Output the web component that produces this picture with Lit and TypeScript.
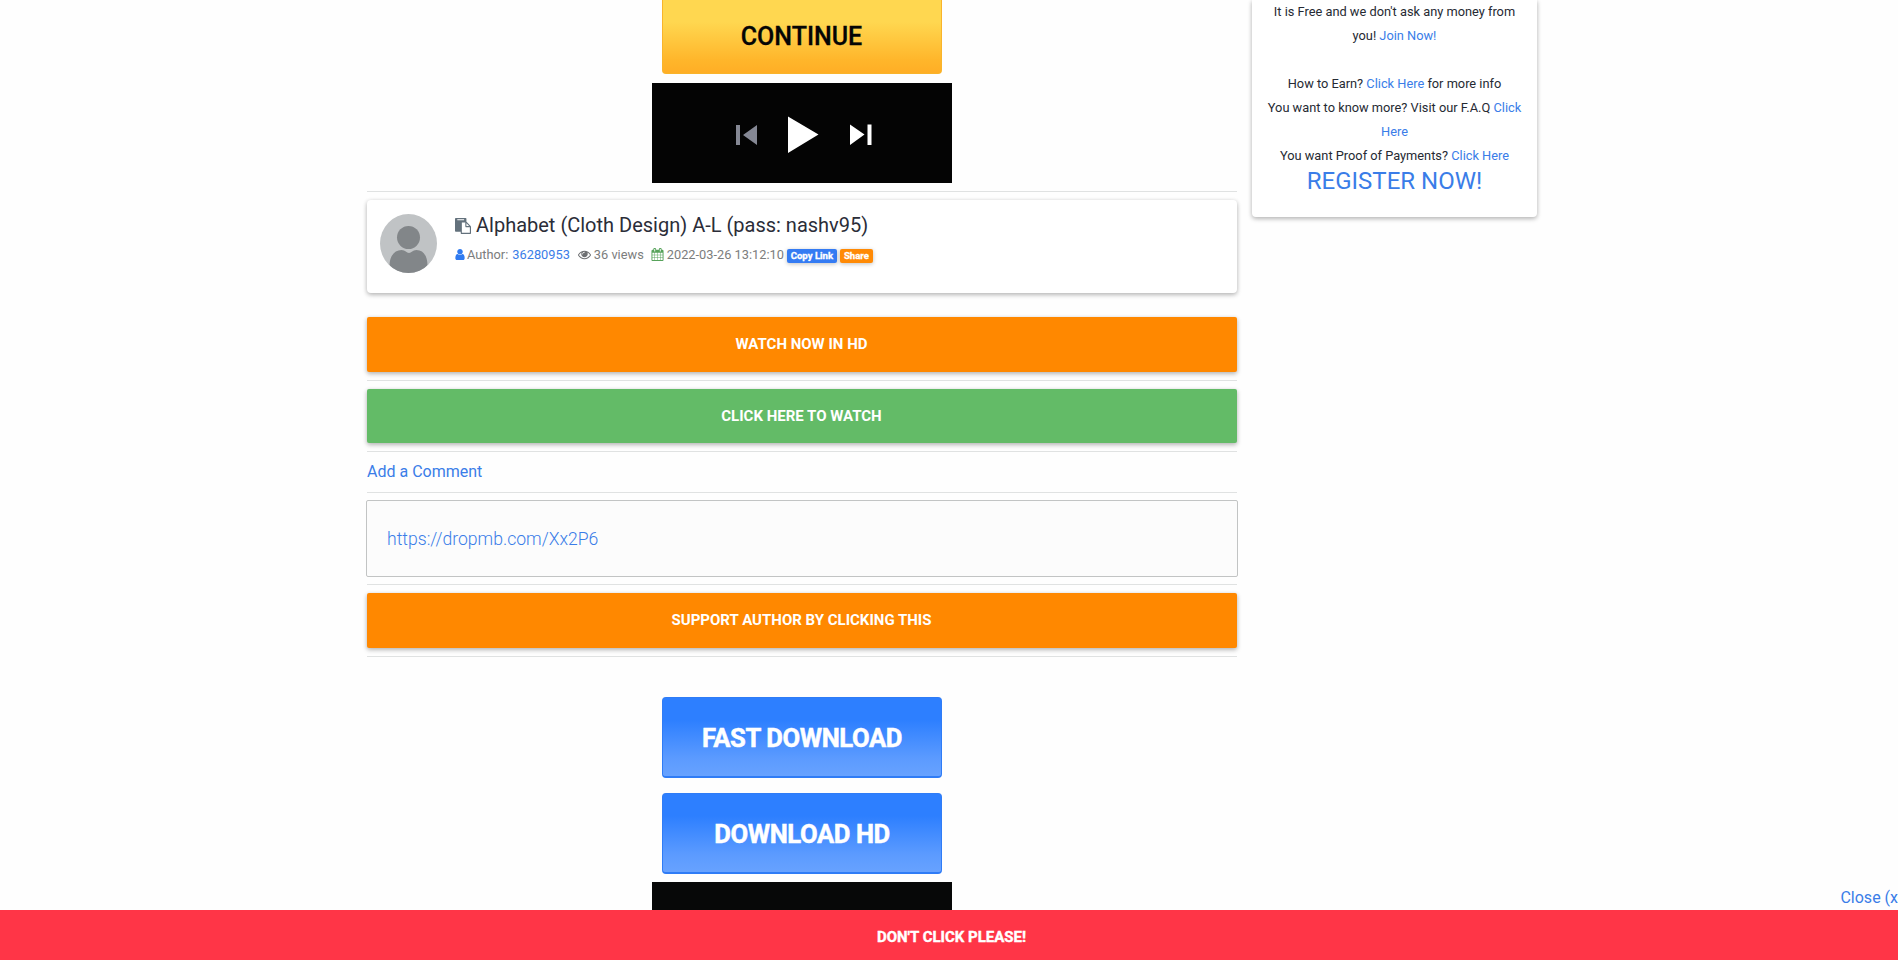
import { LitElement, html, css, svg } from "lit";
import { customElement } from "lit/decorators.js";

const ICONS = {
  user: "M1536 1399q0 109-62.5 187t-150.5 78h-854q-88 0-150.5-78t-62.5-187q0-85 8.5-160.5t31.5-152 58.5-131 94-89 134.5-34.5q131 128 313 128t313-128q76 0 134.5 34.5t94 89 58.5 131 31.5 152 8.5 160.5zm-256-887q0 159-112.5 271.5t-271.5 112.5-271.5-112.5-112.5-271.5 112.5-271.5 271.5-112.5 271.5 112.5 112.5 271.5z",
  eye: "M1664 960q-152-236-381-353 61 104 61 225 0 185-131.5 316.5t-316.5 131.5-316.5-131.5-131.5-316.5q0-121 61-225-229 117-381 353 133 205 333.5 326.5t434.5 121.5 434.5-121.5 333.5-326.5zm-720-384q0-20-14-34t-34-14q-125 0-214.5 89.5t-89.5 214.5q0 20 14 34t34 14 34-14 14-34q0-86 61-147t147-61q20 0 34-14t14-34zm848 384q0 34-20 69-140 230-376.5 368.5t-499.5 138.5-499.5-139-376.5-368q-20-35-20-69t20-69q140-229 376.5-368t499.5-139 499.5 139 376.5 368q20 35 20 69z",
  calendar: "M192 1664h288v-288h-288v288zm352 0h320v-288h-320v288zm-352-352h288v-320h-288v320zm352 0h320v-320h-320v320zm-352-384h288v-288h-288v288zm736 736h320v-288h-320v288zm-384-736h320v-288h-320v288zm768 736h288v-288h-288v288zm-384-352h320v-320h-320v320zm-352-864v-288q0-13-9.5-22.5t-22.5-9.5h-64q-13 0-22.5 9.5t-9.5 22.5v288q0 13 9.5 22.5t22.5 9.5h64q13 0 22.5-9.5t9.5-22.5zm736 864h288v-320h-288v320zm-384-384h320v-288h-320v288zm384 0h288v-288h-288v288zm32-480v-288q0-13-9.5-22.5t-22.5-9.5h-64q-13 0-22.5 9.5t-9.5 22.5v288q0 13 9.5 22.5t22.5 9.5h64q13 0 22.5-9.5t9.5-22.5zm384-64v1280q0 52-38 90t-90 38h-1408q-52 0-90-38t-38-90v-1280q0-52 38-90t90-38h128v-96q0-66 47-113t113-47h64q66 0 113 47t47 113v96h384v-96q0-66 47-113t113-47h64q66 0 113 47t47 113v96h128q52 0 90 38t38 90z",
  paste: "M768 1664h896v-640h-416q-40 0-68-28t-28-68v-416h-384v1152zm256-1440v-64q0-13-9.5-22.5t-22.5-9.5h-704q-13 0-22.5 9.5t-9.5 22.5v64q0 13 9.5 22.5t22.5 9.5h704q13 0 22.5-9.5t9.5-22.5zm256 672h299l-299-299v299zm512 128v672q0 40-28 68t-68 28h-960q-40 0-68-28t-28-68v-160h-544q-40 0-68-28t-28-68v-1344q0-40 28-68t68-28h1088q40 0 68 28t28 68v328q21 13 36 28l408 408q28 28 48 76t20 88z",
};

const icon = (name: keyof typeof ICONS, cls: string, box = "0 0 1792 1792") =>
  html`<svg class=${cls} viewBox=${box}>${svg`<path fill="currentColor" d=${ICONS[name]}></path>`}</svg>`;

@customElement("app-root")
export class AppRoot extends LitElement {
  static styles = css`
    :host {
      display: block;
      position: relative;
      height: 960px;
      overflow: hidden;
      background: #fefefe;
      color: #262a33;
      font-family: Roboto, "Liberation Sans", sans-serif;
    }
    * { box-sizing: border-box; }
    svg { display: block; flex: none; }
    a { color: #3a7de8; text-decoration: none; }
    .page { display: flex; align-items: flex-start; gap: 15px; padding-left: 367px; }
    .main { width: 870px; display: flex; flex-direction: column; }
    .rule { height: 1px; background: #e0e2e2; }
    .rule-above { margin-top: 8px; }
    .rule-tight { margin: 7px 0 8px; }
    .cta {
      align-self: center;
      display: flex;
      align-items: center;
      justify-content: center;
      width: 280px;
      height: 81px;
      border-radius: 4px;
      font-size: 25.6px;
      letter-spacing: -0.4px;
      font-weight: 700;
      -webkit-text-stroke: 0.5px #fff;
      color: #fff;
      border: 1px solid #2f7cf6;
      border-bottom-width: 2px;
      background: linear-gradient(#2d7fff 28%, #5c9bff 78%, #67a2ff);
      padding-top: 2px;
      white-space: nowrap;
    }
    .continue {
      height: 74px;
      border: 1px solid #f9b42b;
      border-top: 0;
      border-radius: 0 0 4px 4px;
      background: linear-gradient(#ffd750 30%, #ffb62b 82%, #ffae25);
      color: #050505;
      font-size: 25px;
      letter-spacing: 0;
      font-weight: 500;
      -webkit-text-stroke: 0.3px #050505;
      padding: 0 1px 1px 0;
    }
    .fast { margin-top: 40px; }
    .hd { margin-top: 15px; }
    .player { align-self: center; width: 300px; height: 100px; margin: 9px 0 8px; background: #040404; }
    .player-next { margin: 8px 0 0; background: #070808; }
    .card {
      height: 93px;
      margin: 8px 0 24px;
      padding: 13px 12px 13px 13px;
      display: flex;
      gap: 17px;
      background: #fff;
      border-radius: 4px;
      box-shadow: 0 2px 5px rgba(0, 0, 0, 0.2), 0 1px 4px rgba(0, 0, 0, 0.14);
    }
    .avatar { margin-top: 1px; }
    .title { display: flex; align-items: center; height: 24px; gap: 5px; font-size: 20px; color: #2b2d38; white-space: nowrap; }
    .title-icon { width: 16px; height: 16px; margin-top: 2px; color: #63717c; }
    .meta { display: flex; align-items: center; height: 20px; margin-top: 7px; font-size: 12.8px; color: #7b7d7d; white-space: nowrap; }
    .i-user { width: 10px; height: 13px; color: #2f7af0; margin-right: 2px; }
    .i-eye { width: 13px; height: 13px; color: #6e7072; margin: 0 3px 0 8px; }
    .i-cal { width: 13px; height: 13px; color: #57a35b; margin: 0 3px 0 7px; }
    .author { margin-left: 4px; }
    .badge {
      height: 14px;
      margin: 3px 0 0 3px;
      border-radius: 2px;
      color: #fff;
      background: #347bf3;
      font-size: 9.6px;
      font-weight: 700;
      -webkit-text-stroke: 0.3px #fff;
      line-height: 14px;
      width: 50px;
      text-align: center;
      box-shadow: 0 1px 4px rgba(0, 0, 0, 0.25);
    }
    .share { width: 33px; background: #ff8a05; }
    .bar {
      height: 55px;
      display: flex;
      align-items: center;
      justify-content: center;
      padding: 0 1px 2px 0;
      border-radius: 2px;
      background: #ff8800;
      color: #fff;
      font-size: 15px;
      font-weight: 700;
      box-shadow: 0 2px 5px rgba(0, 0, 0, 0.22), 0 1px 4px rgba(0, 0, 0, 0.12);
    }
    .green { height: 54px; background: #63bb67; padding-bottom: 0; }
    .gap { margin: 8px 0; }
    .comment { height: 40px; padding-bottom: 2px; display: flex; align-items: center; font-size: 16px; }
    .link {
      height: 77px;
      margin: 7px -1px 0;
      padding-left: 20px;
      display: flex;
      align-items: center;
      border: 1px solid #c2c4c4;
      border-radius: 2px;
      background: #fcfcfc;
      font-size: 17.6px;
      font-weight: 300;
    }
    .side {
      width: 285px;
      height: 217px;
      padding: 0 10px;
      text-align: center;
      font-size: 12.8px;
      line-height: 24px;
      background: #fff;
      border-radius: 0 0 4px 4px;
      box-shadow: 0 2px 5px rgba(0, 0, 0, 0.2), 0 1px 4px rgba(0, 0, 0, 0.14);
    }
    .register { font-size: 24px; line-height: 27px; }
    .sticky {
      position: absolute;
      inset: auto 0 0;
      height: 50px;
      display: flex;
      align-items: center;
      justify-content: center;
      padding: 4px 0 0 5px;
      background: #ff3547;
      color: #fff;
      font-size: 15px;
      font-weight: 700;
      -webkit-text-stroke: 0.4px #fff;
    }
    .close { position: absolute; right: 0; bottom: 50px; font-size: 16px; line-height: 24px; white-space: nowrap; }
  `;

  render() {
    return html`
      <div class="page">
        <div class="main">
          <div class="cta continue">CONTINUE</div>
          <svg class="player" viewBox="0 0 300 100">
            <path fill="#858894" d="M84 42h4v20h-4zM105 42v20L91 52z" />
            <path fill="#fff" d="M136 33.500v36.500L166.500 51.500zM198 41.500v20.500L212.500 51.500zM215.500 41.500h4v20.500h-4z" />
          </svg>
          <div class="rule"></div>
          <div class="card">
            <svg class="avatar" width="58" height="60" viewBox="0 0 58 60">
              <defs><clipPath id="c"><ellipse cx="28.500" cy="29.500" rx="28.500" ry="29.500" /></clipPath></defs>
              <g clip-path="url(#c)">
                <path fill="#c0c3c5" d="M0 0h58v60H0z" />
                <circle cx="28.500" cy="23.500" r="11.500" fill="#828689" />
                <path fill="#828689" d="M9.500 60V52C9.500 42 14.500 36 21.500 36c4 0 5 3 7.500 3s3.500-3 7.500-3c7 0 11 6 11 16v8z" />
              </g>
            </svg>
            <div>
              <div class="title">${icon("paste", "title-icon")}<span>Alphabet (Cloth Design) A-L (pass: nashv95)</span></div>
              <div class="meta">
                ${icon("user", "i-user", "256 0 1280 1792")}<span>Author:</span><a class="author">36280953</a>
                ${icon("eye", "i-eye")}<span>36 views</span>
                ${icon("calendar", "i-cal")}<span>2022-03-26 13:12:10</span>
                <span class="badge">Copy Link</span><span class="badge share">Share</span>
              </div>
            </div>
          </div>
          <div class="bar">WATCH NOW IN HD</div>
          <div class="rule gap"></div>
          <div class="bar green">CLICK HERE TO WATCH</div>
          <div class="rule rule-above"></div>
          <div class="comment"><a>Add a Comment</a></div>
          <div class="rule"></div>
          <div class="link"><a>https://dropmb.com/Xx2P6</a></div>
          <div class="rule rule-tight"></div>
          <div class="bar">SUPPORT AUTHOR BY CLICKING THIS</div>
          <div class="rule rule-above"></div>
          <div class="cta fast">FAST DOWNLOAD</div>
          <div class="cta hd">DOWNLOAD HD</div>
          <div class="player player-next"></div>
        </div>
        <div class="side">
          It is Free and we don't ask any money from<br />you! <a>Join Now!</a><br /><br />
          How to Earn? <a>Click Here</a> for more info<br />
          You want to know more? Visit our F.A.Q <a>Click<br />Here</a><br />
          You want Proof of Payments? <a>Click Here</a>
          <div class="register"><a>REGISTER NOW!</a></div>
        </div>
      </div>
      <a class="close">Close (x</a>
      <div class="sticky">DON'T CLICK PLEASE!</div>
    `;
  }
}
